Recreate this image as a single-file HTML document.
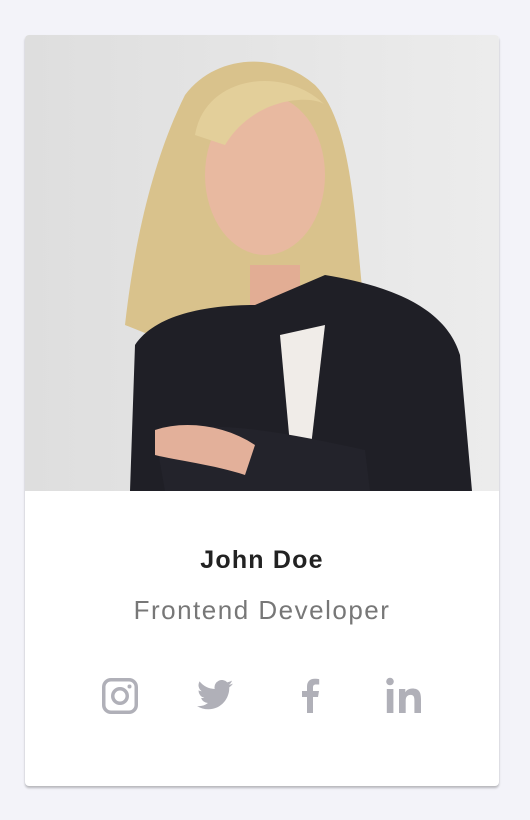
<!DOCTYPE html>
<html><head><style>
body{margin:0;background:#f3f3f9;width:530px;height:820px;position:relative;font-family:"Liberation Sans",sans-serif;}
.card{position:absolute;left:25px;top:35px;width:474px;height:751px;background:#fff;border-radius:4px;box-shadow:0 2px 2px rgba(0,0,0,.25);overflow:hidden}
.img{position:absolute;left:0;top:0;width:474px;height:456px}
.name{position:absolute;top:511px;width:100%;text-align:center;font-size:25px;color:#222;font-weight:600;letter-spacing:1.2px}
.role{position:absolute;top:560px;width:100%;text-align:center;font-size:26px;color:#777;letter-spacing:1.5px}
svg.i{position:absolute;fill:#b0b0b8}
</style></head><body>
<div class="card">
<svg class="img" viewBox="0 0 474 456">
<defs><linearGradient id="bg" x1="0" x2="1"><stop offset="0" stop-color="#dedede"/><stop offset="1" stop-color="#ececec"/></linearGradient></defs>
<rect width="474" height="456" fill="url(#bg)"/>
<path d="M100 290 C110 200 130 120 160 60 C190 20 250 15 290 50 C330 90 330 200 340 280 L300 300 L150 310 Z" fill="#d9c28c"/>
<ellipse cx="240" cy="140" rx="60" ry="80" fill="#e8b9a0"/>
<path d="M170 100 C180 40 260 30 300 70 C290 60 230 60 200 110 Z" fill="#e3cf9a"/>
<rect x="225" y="230" width="50" height="60" fill="#e2ad94"/>
<path d="M105 456 L110 310 C130 280 180 270 230 270 L300 240 C360 250 420 270 435 320 L447 456 Z" fill="#1f1f26"/>
<path d="M255 300 L300 290 L285 420 L265 410 Z" fill="#f0ece8"/>
<path d="M130 400 C180 380 270 400 340 415 L345 456 L140 456 Z" fill="#23232b"/>
<path d="M130 395 C160 385 200 390 230 410 L220 440 C190 430 150 425 130 420 Z" fill="#e3b09a"/>
</svg>
<div class="name">John Doe</div>
<div class="role">Frontend Developer</div>
</div>
<svg class="i" style="left:102px;top:678px" width="36" height="36" viewBox="0 0 36 36"><path fill-rule="evenodd" d="M9 0h18a9 9 0 0 1 9 9v18a9 9 0 0 1-9 9H9a9 9 0 0 1-9-9V9a9 9 0 0 1 9-9zm0 3.5A5.5 5.5 0 0 0 3.5 9v18A5.5 5.5 0 0 0 9 32.5h18a5.5 5.5 0 0 0 5.5-5.5V9A5.5 5.5 0 0 0 27 3.5zM18 9a9 9 0 1 1 0 18 9 9 0 0 1 0-18zm0 3.5a5.5 5.5 0 1 0 0 11 5.5 5.5 0 0 0 0-11zM27.5 6.5a2 2 0 1 1 0 4 2 2 0 0 1 0-4z"/></svg>
<svg class="i" style="left:197px;top:680px" width="36" height="30" viewBox="0 0 24 20"><path d="M24 2.4a10 10 0 0 1-2.8.8A5 5 0 0 0 23.3.4a10 10 0 0 1-3.1 1.2A4.9 4.9 0 0 0 11.8 6 14 14 0 0 1 1.7.9a4.9 4.9 0 0 0 1.5 6.6A4.9 4.9 0 0 1 1 6.9a4.9 4.9 0 0 0 3.9 4.9 5 5 0 0 1-2.2.1 4.9 4.9 0 0 0 4.6 3.4A9.9 9.9 0 0 1 0 17.3 14 14 0 0 0 7.5 19.5c9 0 14-7.5 14-14v-.6A10 10 0 0 0 24 2.4z"/></svg>
<svg class="i" style="left:300px;top:678px" width="20" height="35" viewBox="0 0 20 35"><path d="M13 35V19h5l1-6h-6V9.5c0-1.7.6-3 3-3h3.2V1.2C18.5 1 16.6.8 14.6.8 10 .8 7 3.6 7 8.7V13H2v6h5v16z"/></svg>
<svg class="i" style="left:386px;top:677px" width="37" height="36" viewBox="0 0 37 36"><circle cx="4" cy="4.5" r="3.8"/><rect x="0.8" y="12" width="6.6" height="24"/><path d="M13 12h6.3v3.3c1-1.9 3.4-3.8 7-3.8 7 0 8.7 4.2 8.7 10.5V36h-6.6V23.5c0-3-.5-5.6-3.7-5.6-3.3 0-5 2.2-5 5.5V36H13z"/></svg>
</body></html>
